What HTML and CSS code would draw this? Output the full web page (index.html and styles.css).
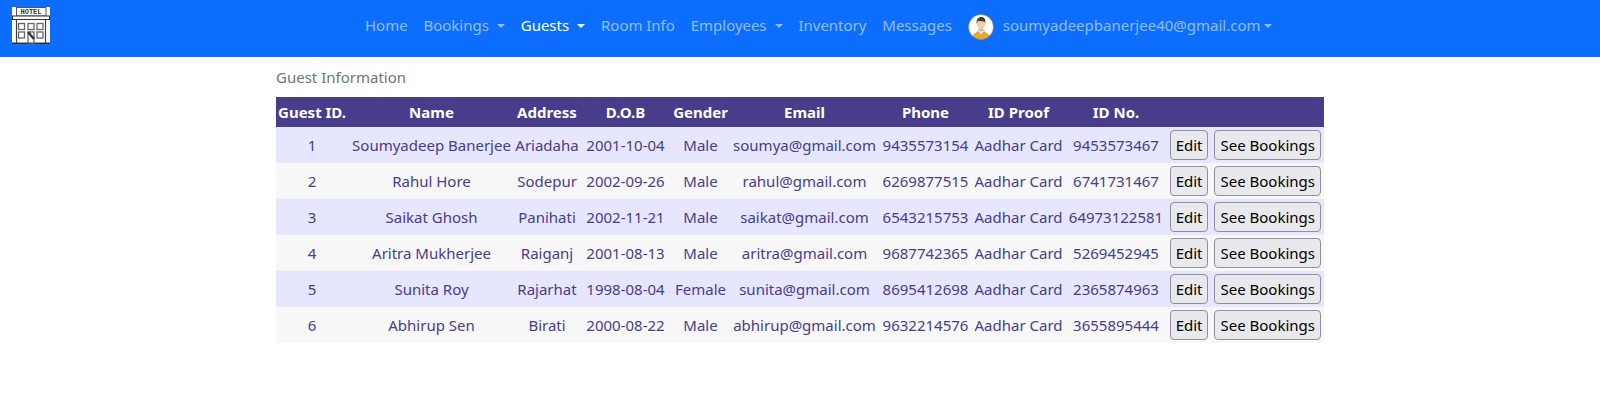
FILE: index.html
```html
<!DOCTYPE html>
<html lang="en">
<head>
<meta charset="utf-8">
<title>Guest Information</title>
<link rel="stylesheet" href="styles.css">
</head>
<body>
<nav class="navbar">
  <a class="brand" href="#" aria-label="Hotel">
    <svg width="38" height="37" viewBox="0 0 38 37">
      <rect x="0" y="0" width="38" height="37" fill="#fff"/>
      <rect x="4.5" y="0.5" width="29.5" height="8.5" fill="#fff" stroke="#555" stroke-width="1"/>
      <text x="19" y="7" class="sign" text-anchor="middle">HOTEL</text>
      <rect x="0.5" y="9" width="37" height="3.5" fill="#fff" stroke="#333" stroke-width="1"/>
      <path d="M4.5 13V36M33.5 13V36" stroke="#444" stroke-width="1.2" fill="none"/>
      <path d="M0 36.2H38" stroke="#333" stroke-width="1.6"/>
      <g fill="#fff" stroke="#666" stroke-width="1.3">
        <rect x="6.5" y="16.5" width="6" height="6"/><rect x="16" y="16.5" width="6" height="6"/><rect x="25" y="16.5" width="6" height="6"/>
        <rect x="6.5" y="25" width="6" height="6"/><rect x="25" y="25" width="6" height="6"/>
        <rect x="16" y="25" width="6" height="11"/>
      </g>
      <path d="M16 25L22 32" stroke="#333" stroke-width="2.4"/>
    </svg>
  </a>
  <ul class="nav">
    <li><a href="#">Home</a></li>
    <li><a href="#" class="caret">Bookings</a></li>
    <li><a href="#" class="caret active">Guests</a></li>
    <li><a href="#">Room Info</a></li>
    <li><a href="#" class="caret">Employees</a></li>
    <li><a href="#">Inventory</a></li>
    <li><a href="#">Messages</a></li>
    <li class="user">
      <svg class="avatar" width="26" height="26" viewBox="0 0 26 26">
        <defs><clipPath id="c"><circle cx="13" cy="13" r="12.5"/></clipPath></defs>
        <circle cx="13" cy="13" r="12.5" fill="#fff"/>
        <g clip-path="url(#c)">
          <path d="M2.5 26C3.5 20.5 8 18.5 10 17.8L13 20L16 17.8C18 18.5 22.5 20.5 23.5 26Z" fill="#f5a623"/>
          <path d="M9.5 17.5L13 21.5L16.5 17.5L15 15.5H11Z" fill="#e8e4da" stroke="#777" stroke-width=".5"/>
          <rect x="11" y="13" width="4" height="4" fill="#e3b78d"/>
          <ellipse cx="13" cy="10" rx="3.8" ry="5" fill="#f2cda6"/>
          <path d="M8.8 10C8 5 10.5 3 13.3 3C16.5 3 18 5.5 17.2 10L16.4 7.4C14 7.6 11.5 7 10 6.8Z" fill="#4a3b30"/>
        </g>
        <circle cx="13" cy="13" r="12.5" fill="none" stroke="#777" stroke-width=".7"/>
      </svg>
      <a href="#" class="caret">soumyadeepbanerjee40@gmail.com</a>
    </li>
  </ul>
</nav>
<main class="content">
  <p class="title">Guest Information</p>
  <table class="guests">
    <thead>
      <tr><th>Guest ID.</th><th>Name</th><th>Address</th><th>D.O.B</th><th>Gender</th><th>Email</th><th>Phone</th><th>ID Proof</th><th>ID No.</th><th></th></tr>
    </thead>
    <tbody>
      <tr><td>1</td><td>Soumyadeep Banerjee</td><td>Ariadaha</td><td>2001-10-04</td><td>Male</td><td>soumya@gmail.com</td><td>9435573154</td><td>Aadhar Card</td><td>9453573467</td><td class="actions"><button>Edit</button><button>See Bookings</button></td></tr>
      <tr><td>2</td><td>Rahul Hore</td><td>Sodepur</td><td>2002-09-26</td><td>Male</td><td>rahul@gmail.com</td><td>6269877515</td><td>Aadhar Card</td><td>6741731467</td><td class="actions"><button>Edit</button><button>See Bookings</button></td></tr>
      <tr><td>3</td><td>Saikat Ghosh</td><td>Panihati</td><td>2002-11-21</td><td>Male</td><td>saikat@gmail.com</td><td>6543215753</td><td>Aadhar Card</td><td>64973122581</td><td class="actions"><button>Edit</button><button>See Bookings</button></td></tr>
      <tr><td>4</td><td>Aritra Mukherjee</td><td>Raiganj</td><td>2001-08-13</td><td>Male</td><td>aritra@gmail.com</td><td>9687742365</td><td>Aadhar Card</td><td>5269452945</td><td class="actions"><button>Edit</button><button>See Bookings</button></td></tr>
      <tr><td>5</td><td>Sunita Roy</td><td>Rajarhat</td><td>1998-08-04</td><td>Female</td><td>sunita@gmail.com</td><td>8695412698</td><td>Aadhar Card</td><td>2365874963</td><td class="actions"><button>Edit</button><button>See Bookings</button></td></tr>
      <tr><td>6</td><td>Abhirup Sen</td><td>Birati</td><td>2000-08-22</td><td>Male</td><td>abhirup@gmail.com</td><td>9632214576</td><td>Aadhar Card</td><td>3655895444</td><td class="actions"><button>Edit</button><button>See Bookings</button></td></tr>
    </tbody>
  </table>
</main>
</body>
</html>
```

FILE: styles.css
```css
* { box-sizing: border-box; }
body {
  margin: 0;
  background: #fff;
  font-family: "Noto Sans", "Open Sans", sans-serif;
  font-size: 15px;
  color: #212529;
}
.navbar {
  height: 57px;
  background: #0d6efd;
  display: flex;
  align-items: center;
  padding: 0 12px;
}
.brand { display: block; height: 37px; margin-top: -6px; }
.sign { font: bold 7px "Liberation Mono", monospace; fill: #333; }
.nav {
  list-style: none;
  display: flex;
  align-items: center;
  gap: 16px;
  margin: 0 0 0 315px;
  padding: 0;
  height: 50px;
  align-self: flex-start;
}
.nav a {
  color: rgba(255, 255, 255, .55);
  text-decoration: none;
  letter-spacing: -.03px;
}
.nav a.active { color: #fff; }
.caret::after {
  content: "";
  display: inline-block;
  margin-left: 8px;
  vertical-align: 3px;
  border-top: 4.8px solid;
  border-left: 4.8px solid transparent;
  border-right: 4.8px solid transparent;
}
.user { display: flex; align-items: center; gap: 9px; }
.user a { letter-spacing: 0; }
.user .caret::after { margin-left: 3px; }
.avatar { display: block; margin-top: 4px; }
.content {
  width: 1048px;
  margin: 0 auto;
}
.title {
  margin: 0;
  padding-top: 10px;
  height: 40px;
  color: #6c757d;
  line-height: 20px;
}
.guests {
  width: 1048px;
  table-layout: fixed;
  border-collapse: collapse;
  text-align: center;
  color: #483d8b;
}
.guests th {
  height: 30px;
  padding: 0;
  background: #483d8b;
  color: #fff;
  font-weight: 700;
}
.guests td { height: 36px; padding: 0; white-space: nowrap; }
.guests tbody tr:nth-child(odd) { background: #e6e6ff; }
.guests tbody tr:nth-child(even) { background: #f7f7f7; }
.guests th:nth-child(1) { width: 72px; }
.guests th:nth-child(2) { width: 167px; }
.guests th:nth-child(3) { width: 64px; }
.guests th:nth-child(4) { width: 93px; }
.guests th:nth-child(5) { width: 57px; }
.guests th:nth-child(6) { width: 151px; }
.guests th:nth-child(7) { width: 91px; }
.guests th:nth-child(8) { width: 95px; }
.guests th:nth-child(9) { width: 100px; }
.guests .actions { text-align: right; padding-right: 3px; }
.actions button {
  height: 30px;
  padding: 0 5px;
  font: inherit;
  color: #000;
  background: #e9e9ed;
  border: 1px solid #8f8f9d;
  border-radius: 4px;
  vertical-align: middle;
}
.actions button + button { margin-left: 6px; }
```
